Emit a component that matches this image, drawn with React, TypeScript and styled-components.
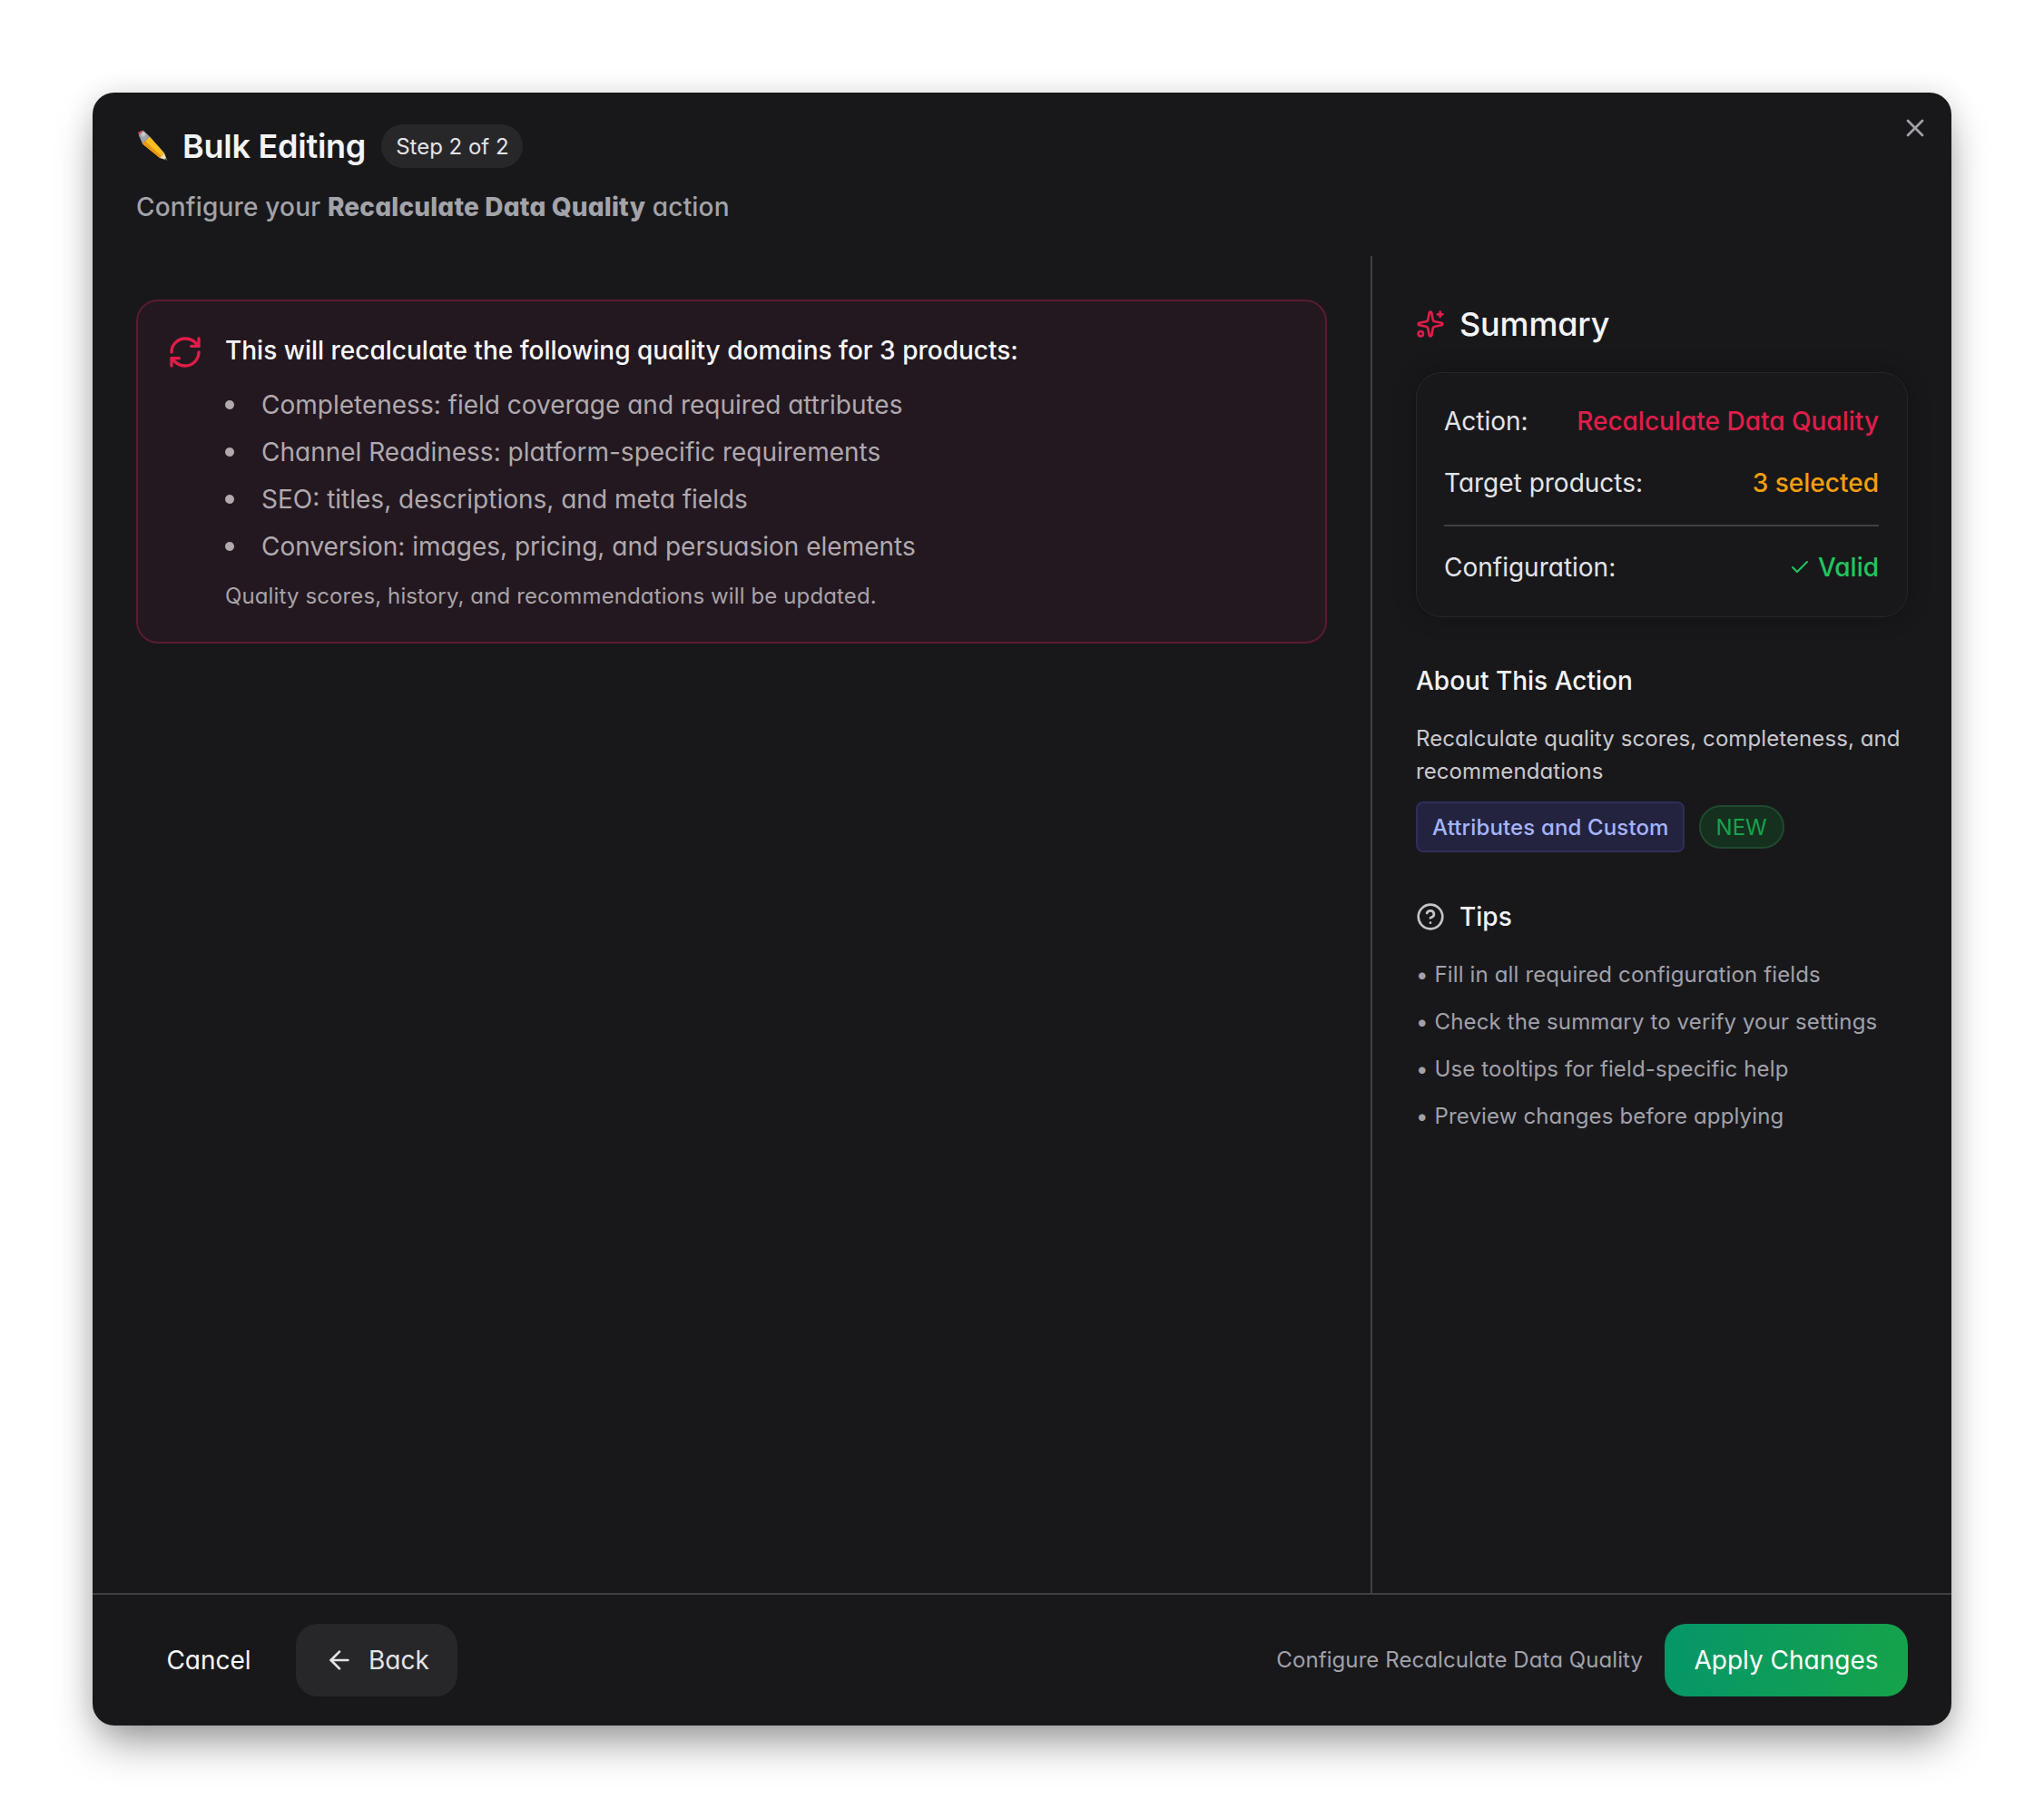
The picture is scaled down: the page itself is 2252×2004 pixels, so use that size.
import React from "react";
import styled, { createGlobalStyle } from "styled-components";
import { X, Sparkles, RefreshCw, CircleHelp, Check, ArrowLeft } from "lucide-react";

const Global = createGlobalStyle`
  html, body { margin: 0; padding: 0; background: #ffffff; }
  body {
    font-family: Inter, "Liberation Sans", sans-serif;
    font-feature-settings: "cv11" 1;
    -webkit-font-smoothing: antialiased;
  }
  * { box-sizing: border-box; }
`;

const Page = styled.div`
  width: 2252px;
  height: 2004px;
  padding: 102px;
  background: #ffffff;
`;
const Modal = styled.div`
  position: relative;
  width: 2048px;
  height: 1799px;
  background: #18181b;
  border-radius: 24px;
  box-shadow: 0 24px 48px -8px rgba(0, 0, 0, 0.42), 0 0 30px rgba(0, 0, 0, 0.1);
  display: flex;
  flex-direction: column;
  overflow: hidden;
`;
const CloseBtn = styled.button`
  position: absolute;
  top: 23px;
  right: 24px;
  width: 32px;
  height: 32px;
  padding: 0;
  border: 0;
  background: transparent;
  color: #a1a1aa;
  display: flex;
`;
const Header = styled.header`
  height: 180px;
  padding: 32px 48px 0;
  flex: none;
`;
const TitleRow = styled.div`
  display: flex;
  align-items: center;
  height: 54px;
`;
const Pencil = styled.svg`
  width: 38px;
  height: 38px;
  flex: none;
  margin-left: -1px;
  margin-top: -3px;
`;
const Title = styled.h2`
  margin: 0 0 0 14px;
  font-size: 36px;
  line-height: 54px;
  font-weight: 600;
  letter-spacing: -0.25px;
  color: #f4f4f5;
`;
const StepBadge = styled.span`
  margin-left: 17px;
  height: 48px;
  padding: 0 15px 0 16px;
  border-radius: 24px;
  background: #27272a;
  color: #e4e4e7;
  font-size: 24px;
  font-weight: 400;
  display: flex;
  align-items: center;
`;
const Subtitle = styled.p`
  margin: 20px 0 0;
  font-size: 28px;
  line-height: 40px;
  letter-spacing: 0.19px;
  color: #a3a3a8;
  font-weight: 500;
  strong { font-weight: 800; }
`;
const Body = styled.div`
  flex: 1;
  display: flex;
  min-height: 0;
`;
const Main = styled.main`
  flex: 1;
  padding: 48px;
  border-right: 2px solid #3f3f46;
`;
const Alert = styled.section`
  border: 2px solid #5c1a30;
  background: #231820;
  border-radius: 24px;
  padding: 32px;
  display: flex;
  gap: 24px;
  height: 379px;
`;
const AlertIcon = styled.div`
  flex: none;
  width: 40px;
  height: 40px;
  margin-top: 4px;
  color: #e11d48;
`;
const AlertText = styled.div`
  flex: 1;
`;
const AlertLead = styled.p`
  margin: -1px 0 0;
  font-size: 28px;
  line-height: 46px;
  font-weight: 500;
  color: #fafafa;
`;
const AlertList = styled.ul`
  margin: 17px 0 0;
  padding: 0;
  list-style: none;
  display: flex;
  flex-direction: column;
  gap: 12px;
  color: #b0a9ae;
  font-size: 28px;
  line-height: 40px;
`;
const AlertItem = styled.li`
  display: flex;
  align-items: center;
  &::before {
    content: "";
    flex: none;
    width: 10px;
    height: 10px;
    margin-right: 30px;
    border-radius: 50%;
    background: #b0a9ae;
  }
`;
const AlertNote = styled.p`
  margin: 19px 0 0;
  font-size: 24px;
  line-height: 32px;
  letter-spacing: 0.12px;
  color: #a9a3a7;
`;
const Side = styled.aside`
  width: 638px;
  flex: none;
  padding: 55px 48px 0;
`;
const SectionHead = styled.div`
  display: flex;
  align-items: center;
  gap: 16px;
`;
const SummaryTitle = styled.h3`
  margin: 0;
  font-size: 36px;
  line-height: 40px;
  font-weight: 500;
  letter-spacing: -0.15px;
  color: #f4f4f5;
`;
const SummaryCard = styled.div`
  margin-top: 33px;
  height: 270px;
  padding: 33px 31px 0 30px;
  border: 1px solid #27272a;
  border-radius: 28px;
  background: #18181b;
  box-shadow: 0 0 24px rgba(0, 0, 0, 0.25);
`;
const Row = styled.div<{ $gap?: number }>`
  display: flex;
  justify-content: space-between;
  align-items: center;
  height: 40px;
  font-size: 28px;
  margin-top: ${(p) => p.$gap ?? 0}px;
`;
const RowLabel = styled.span`
  color: #e4e4e7;
`;
const RowValue = styled.span<{ $color: string }>`
  color: ${(p) => p.$color};
  font-weight: 500;
  display: flex;
  align-items: center;
  gap: 8px;
`;
const RowLine = styled.hr`
  margin: 26px 0 0;
  border: 0;
  height: 2px;
  background: #3f3f46;
`;
const AboutTitle = styled.h4`
  margin: 50px 0 0;
  font-size: 28px;
  line-height: 40px;
  font-weight: 500;
  color: #f4f4f5;
`;
const AboutText = styled.p`
  margin: 26px 0 0;
  font-size: 24px;
  line-height: 36px;
  letter-spacing: 0.09px;
  color: #c9c9ce;
`;
const Tags = styled.div`
  margin-top: 15px;
  display: flex;
  align-items: center;
  gap: 16px;
`;
const KindTag = styled.span`
  height: 56px;
  padding: 0 15px 0 16px;
  border: 2px solid #2e2e5c;
  border-radius: 8px;
  background: #23233f;
  color: #a5b4fc;
  font-size: 24px;
  font-weight: 500;
  letter-spacing: 0.14px;
  display: flex;
  align-items: center;
`;
const NewTag = styled.span`
  height: 48px;
  padding: 0 17px;
  border: 2px solid #1f4a2e;
  border-radius: 24px;
  background: #15301f;
  color: #16a34a;
  font-size: 24px;
  font-weight: 400;
  display: flex;
  align-items: center;
`;
const TipsHead = styled(SectionHead)`
  margin-top: 51px;
  color: #c4c4c8;
`;
const TipsTitle = styled.h4`
  margin: 0;
  font-size: 28px;
  line-height: 40px;
  font-weight: 500;
  color: #f4f4f5;
`;
const TipsList = styled.div`
  margin-top: 26px;
  display: flex;
  flex-direction: column;
  gap: 16px;
`;
const Tip = styled.div`
  font-size: 24px;
  line-height: 36px;
  letter-spacing: 0.14px;
  color: #a1a1aa;
`;
const Footer = styled.footer`
  flex: none;
  height: 146px;
  border-top: 2px solid #3f3f46;
  padding: 32px 48px 0;
  display: flex;
  justify-content: space-between;
  align-items: flex-start;
`;
const FooterGroup = styled.div<{ $gap: number }>`
  display: flex;
  align-items: center;
  gap: ${(p) => p.$gap}px;
`;
const GhostButton = styled.button`
  height: 80px;
  width: 160px;
  padding: 0;
  border: 0;
  border-radius: 24px;
  background: transparent;
  color: #fafafa;
  font: 400 28px Inter, sans-serif;
  font-feature-settings: "cv11" 1;
`;
const BackButton = styled.button`
  height: 80px;
  width: 178px;
  padding: 0 0 0 32px;
  border: 0;
  border-radius: 24px;
  background: #27272a;
  color: #e4e4e7;
  font: 400 28px Inter, sans-serif;
  font-feature-settings: "cv11" 1;
  display: flex;
  align-items: center;
  gap: 16px;
`;
const StatusText = styled.span`
  font-size: 24px;
  letter-spacing: 0.08px;
  color: #a1a1aa;
  margin-bottom: 2px;
`;
const ApplyButton = styled.button`
  height: 80px;
  width: 268px;
  padding: 0;
  border: 0;
  border-radius: 24px;
  background: linear-gradient(100deg, #059669, #16a34a);
  color: #ffffff;
  font: 400 28px Inter, sans-serif;
  font-feature-settings: "cv11" 1;
`;

const tips = [
  "Fill in all required configuration fields",
  "Check the summary to verify your settings",
  "Use tooltips for field-specific help",
  "Preview changes before applying",
];
const domains = [
  "Completeness: field coverage and required attributes",
  "Channel Readiness: platform-specific requirements",
  "SEO: titles, descriptions, and meta fields",
  "Conversion: images, pricing, and persuasion elements",
];

export default function App() {
  return (
    <>
      <Global />
      <Page>
        <Modal>
          <CloseBtn aria-label="Close"><X size={32} strokeWidth={2} /></CloseBtn>
          <Header>
            <TitleRow>
              <Pencil viewBox="0 0 38 38">
                <polygon points="3,5 8,2.5 11,5 5,10" fill="#c9505c" />
                <polygon points="4,8 9,3 16,9.5 8,17.5" fill="#a3a3aa" />
                <polygon points="6,7 9,4 12,7 9,10" fill="#c8c8cc" />
                <polygon points="8,17.5 16,9.5 32,27.5 27,33" fill="#fbbf24" />
                <polygon points="8,17.5 11,14.5 29,31 27,33" fill="#e8960f" />
                <polygon points="27,33 32,27.5 35,35.5" fill="#f3dfb0" />
                <polygon points="33,33 36,36 32.5,35.5" fill="#3a3a3a" />
              </Pencil>
              <Title>Bulk Editing</Title>
              <StepBadge>Step 2 of 2</StepBadge>
            </TitleRow>
            <Subtitle>Configure your <strong>Recalculate Data Quality</strong> action</Subtitle>
          </Header>
          <Body>
            <Main>
              <Alert>
                <AlertIcon><RefreshCw size={40} strokeWidth={2} /></AlertIcon>
                <AlertText>
                  <AlertLead>This will recalculate the following quality domains for 3 products:</AlertLead>
                  <AlertList>
                    {domains.map((d) => <AlertItem key={d}>{d}</AlertItem>)}
                  </AlertList>
                  <AlertNote>Quality scores, history, and recommendations will be updated.</AlertNote>
                </AlertText>
              </Alert>
            </Main>
            <Side>
              <SectionHead>
                <Sparkles size={32} strokeWidth={2} color="#e11d48" />
                <SummaryTitle>Summary</SummaryTitle>
              </SectionHead>
              <SummaryCard>
                <Row>
                  <RowLabel>Action:</RowLabel>
                  <RowValue $color="#e11d48">Recalculate Data Quality</RowValue>
                </Row>
                <Row $gap={28}>
                  <RowLabel>Target products:</RowLabel>
                  <RowValue $color="#f59e0b">3 selected</RowValue>
                </Row>
                <RowLine />
                <Row $gap={25}>
                  <RowLabel>Configuration:</RowLabel>
                  <RowValue $color="#22c55e"><Check size={24} strokeWidth={2} />Valid</RowValue>
                </Row>
              </SummaryCard>
              <AboutTitle>About This Action</AboutTitle>
              <AboutText>Recalculate quality scores, completeness, and recommendations</AboutText>
              <Tags>
                <KindTag>Attributes and Custom</KindTag>
                <NewTag>NEW</NewTag>
              </Tags>
              <TipsHead>
                <CircleHelp size={32} strokeWidth={2} />
                <TipsTitle>Tips</TipsTitle>
              </TipsHead>
              <TipsList>
                {tips.map((t) => <Tip key={t}>• {t}</Tip>)}
              </TipsList>
            </Side>
          </Body>
          <Footer>
            <FooterGroup $gap={16}>
              <GhostButton>Cancel</GhostButton>
              <BackButton><ArrowLeft size={32} strokeWidth={2} />Back</BackButton>
            </FooterGroup>
            <FooterGroup $gap={24}>
              <StatusText>Configure Recalculate Data Quality</StatusText>
              <ApplyButton>Apply Changes</ApplyButton>
            </FooterGroup>
          </Footer>
        </Modal>
      </Page>
    </>
  );
}
